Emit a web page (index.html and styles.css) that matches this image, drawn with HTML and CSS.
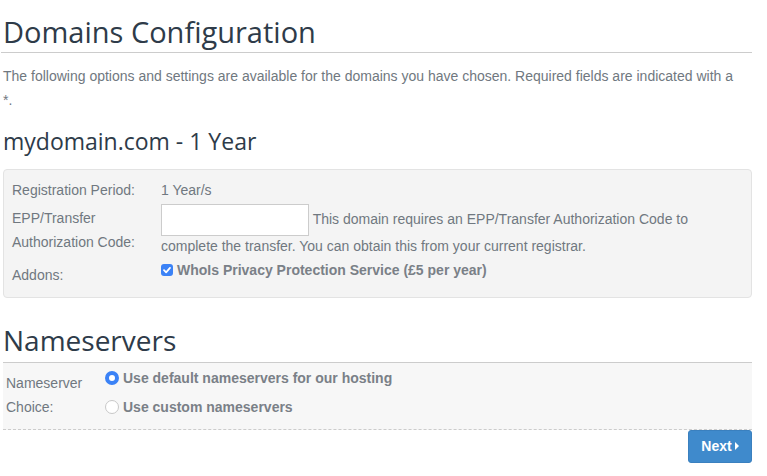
FILE: index.html
```html
<!DOCTYPE html>
<html lang="en">
<head>
    <meta charset="UTF-8">
    <meta name="viewport" content="width=device-width, initial-scale=1.0">
    <title>Domains Configuration</title>
    <link rel="stylesheet" href="styles.css">
</head>
<body>
    <div class="main">
        <h1 class="page-title">Domains Configuration</h1>
        <p class="intro">The following options and settings are available for the domains you have chosen. Required fields are indicated with a *.</p>

        <h2 class="domain-title">mydomain.com - 1 Year</h2>
        <div class="well">
            <div class="field-label">Registration Period:</div>
            <div class="field-value">1 Year/s</div>

            <div class="field-label pad">EPP/Transfer Authorization Code:</div>
            <div class="field-value epp">
                <input class="epp-input" type="text"> This domain requires an EPP/Transfer Authorization Code to complete the transfer. You can obtain this from your current registrar.
            </div>

            <div class="field-label pad addons">Addons:</div>
            <div class="field-value addons">
                <label class="option">
                    <span class="check">
                        <svg width="12" height="12" viewBox="0 0 12 12"><path d="M3 6.2 L5.1 8.3 L9 3.9" fill="none" stroke="#fff" stroke-width="1.8" stroke-linecap="round" stroke-linejoin="round"/></svg>
                    </span>
                    WhoIs Privacy Protection Service (£5 per year)
                </label>
            </div>
        </div>

        <h2 class="section-title">Nameservers</h2>
        <div class="ns-box">
            <div class="ns-label">Nameserver Choice:</div>
            <div class="ns-options">
                <label class="option ns-option"><span class="radio checked"></span>Use default nameservers for our hosting</label>
                <label class="option ns-option"><span class="radio"></span>Use custom nameservers</label>
            </div>
        </div>

        <div class="actions">
            <button class="btn-next">Next <span class="caret"></span></button>
        </div>
    </div>
</body>
</html>
```

FILE: styles.css
```css
body {
    margin: 0;
    padding: 0;
    background-color: #fff;
    font-family: "Liberation Sans", Arial, sans-serif;
    font-size: 14px;
    color: #707880;
}

.main {
    width: 751px;
    margin-left: 1px;
}

/* titulos */
.page-title,
.domain-title,
.section-title {
    font-family: "Open Sans", sans-serif;
    font-weight: 400;
    color: #2e3b49;
    line-height: 1.2;
    margin-bottom: 0;
}

.page-title {
    font-size: 29px;
    margin-top: 15px;
    padding: 0 0 2px 2px;
    border-bottom: 1px solid #ccc;
}

.intro {
    margin: 11px 10px 0 2px;
    line-height: 24px;
}

.domain-title {
    font-size: 23px;
    margin: 16px 0 14px 2px;
}

/* caixa cinza */
.well {
    margin-left: 2px;
    display: grid;
    grid-template-columns: 149px 1fr;
    padding: 8px 8px 10px 8px;
    background-color: #f4f4f4;
    border: 1px solid #e3e3e3;
    border-radius: 4px;
    line-height: 24px;
}

.field-label {
    padding-right: 10px;
}

.field-label.pad {
    padding-top: 4px;
}

.addons {
    margin-top: 2px;
}

.field-label.addons {
    padding-top: 5px;
}

.epp {
    line-height: 20px;
    padding-top: 2px;
}

.epp-input {
    width: 148px;
    height: 32px;
    box-sizing: border-box;
    vertical-align: middle;
    border: 1px solid #ccc;
    background-color: #fff;
    margin: 0;
    padding: 4px 6px;
}

.option {
    display: flex;
    align-items: center;
    font-weight: bold;
    color: #7a8087;
}

.check {
    width: 12px;
    height: 12px;
    border-radius: 3px;
    background-color: #3b82f6;
    margin-right: 4px;
    display: flex;
}

/* nameservers */
.section-title {
    font-size: 28px;
    margin: 26px 0 0 2px;
    padding-bottom: 4px;
    border-bottom: 1px solid #ccc;
}

.ns-box {
    margin-left: 2px;
    display: flex;
    padding: 4px 0 10px 3px;
    background-color: #f7f7f7;
    border-bottom: 1px dashed #ccc;
}

.ns-label {
    width: 99px;
    padding-top: 4px;
    line-height: 24px;
}

.ns-options {
    display: flex;
    flex-direction: column;
    gap: 5px;
    margin-top: -1px;
}

.ns-option {
    height: 24px;
}

.radio {
    width: 14px;
    height: 14px;
    box-sizing: border-box;
    border-radius: 50%;
    border: 1px solid #c8c8c8;
    background-color: #fff;
    margin-right: 4px;
}

.radio.checked {
    border: 4.5px solid #3b82f6;
}

/* botao */
.actions {
    display: flex;
    justify-content: flex-end;
}

.btn-next {
    width: 64px;
    height: 33px;
    background-color: #3f8acc;
    border: 1px solid #3a80bf;
    border-radius: 3px;
    color: #fff;
    font-family: "Liberation Sans", Arial, sans-serif;
    font-size: 14px;
    font-weight: bold;
    padding: 0;
    display: flex;
    align-items: center;
    justify-content: center;
    gap: 3px;
}

.caret {
    width: 0;
    height: 0;
    border-top: 4px solid transparent;
    border-bottom: 4px solid transparent;
    border-left: 4px solid #fff;
}
```
